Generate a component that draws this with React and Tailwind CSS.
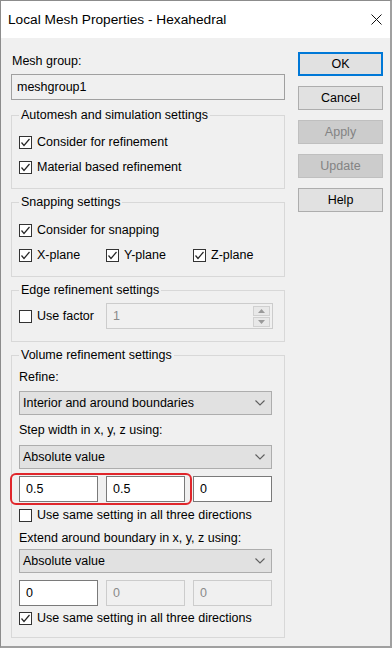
import React from "react";

function Check({ checked }) {
  return (
    <div className="w-[13px] h-[13px] border border-[#333333] bg-white flex items-center justify-center shrink-0">
      {checked && (
        <svg width="11" height="11" viewBox="0 0 11 11">
          <polyline points="1.5,5.5 4,8.5 9.5,2" fill="none" stroke="#262626" strokeWidth="1.2" />
        </svg>
      )}
    </div>
  );
}

function CheckRow({ checked, label, className = "" }) {
  return (
    <div className={"h-[16px] flex items-center gap-[5px] " + className}>
      <Check checked={checked} />
      <span className="whitespace-nowrap">{label}</span>
    </div>
  );
}

function Group({ title, className = "", children }) {
  return (
    <div className={"relative border border-[#d8d8d8] " + className}>
      <div className="absolute top-[-9px] left-[7px] px-[2px] bg-[#f0f0f0] leading-[16px] whitespace-nowrap">
        {title}
      </div>
      {children}
    </div>
  );
}

function Select({ value, className = "" }) {
  return (
    <div className={"h-[24px] w-[253px] bg-[#e1e1e1] border border-[#adadad] flex items-center justify-between pl-[3px] pr-[6px] " + className}>
      <span>{value}</span>
      <svg width="10" height="6" viewBox="0 0 10 6">
        <polyline points="0.5,0.5 5,5 9.5,0.5" fill="none" stroke="#5f5f5f" strokeWidth="1.1" />
      </svg>
    </div>
  );
}

function Input({ value, disabled }) {
  return (
    <div
      className={
        "h-[26px] flex items-center pl-[6px] border " +
        (disabled
          ? "bg-[#f0f0f0] border-[#cccccc] text-[#8a8a8a]"
          : "bg-white border-[#7a7a7a] text-black")
      }
    >
      {value}
    </div>
  );
}

function Btn({ label, kind }) {
  const cls =
    kind === "default"
      ? "bg-[#e1e1e1] border-2 border-[#0078d7] text-black"
      : kind === "disabled"
      ? "bg-[#cccccc] border border-[#bfbfbf] text-[#838383]"
      : "bg-[#e1e1e1] border border-[#adadad] text-black";
  return <div className={"h-[24px] w-[85px] flex items-center justify-center " + cls}>{label}</div>;
}

export default function App() {
  return (
    <div className="w-[392px] h-[648px] bg-[#f0f0f0] border-l border-t border-[#8c8c8c] border-r-2 border-b-2 border-r-[#a0a0a0] border-b-[#a0a0a0] flex flex-col font-['Liberation_Sans',Arial,sans-serif] text-[12.5px] leading-[16px] text-black overflow-hidden">
      {/* title bar */}
      <div className="h-[37px] bg-white flex items-center justify-between pl-[7px] pr-[8px] shrink-0">
        <span className="text-[13.7px] text-black">Local Mesh Properties - Hexahedral</span>
        <svg width="11" height="11" viewBox="0 0 11 11">
          <line x1="0.5" y1="0.5" x2="10.5" y2="10.5" stroke="#111" strokeWidth="1" />
          <line x1="10.5" y1="0.5" x2="0.5" y2="10.5" stroke="#111" strokeWidth="1" />
        </svg>
      </div>

      {/* body */}
      <div className="flex pl-[10px] gap-[13px]">
        {/* left column */}
        <div className="w-[274px] flex flex-col pt-[15px]">
          <div className="h-[16px] pl-[1px]">Mesh group:</div>
          <div className="mt-[5px] h-[26px] border border-[#a0a0a0] bg-[#f0f0f0] flex items-center pl-[5px]">
            meshgroup1
          </div>

          <Group title="Automesh and simulation settings" className="mt-[15px] h-[74px] pl-[7px] pt-[18px]">
            <div className="flex flex-col gap-[9px]">
              <CheckRow checked label="Consider for refinement" />
              <CheckRow checked label="Material based refinement" />
            </div>
          </Group>

          <Group title="Snapping settings" className="mt-[13px] h-[75px] pl-[7px] pt-[19px]">
            <div className="flex flex-col gap-[9px]">
              <CheckRow checked label="Consider for snapping" />
              <div className="grid grid-cols-[87px_87px_79px]">
                <CheckRow checked label="X-plane" />
                <CheckRow checked label="Y-plane" />
                <CheckRow checked label="Z-plane" />
              </div>
            </div>
          </Group>

          <Group title="Edge refinement settings" className="mt-[13px] h-[52px] pl-[7px] pt-[12px]">
            <div className="flex items-center">
              <CheckRow label="Use factor" className="w-[87px]" />
              <div className="w-[167px] h-[26px] border border-[#cccccc] bg-[#f0f0f0] flex items-center justify-between pl-[6px] pr-[2px] text-[#8a8a8a]">
                <span>1</span>
                <div className="flex flex-col gap-[1px]">
                  <div className="w-[17px] h-[10px] bg-[#e8e8e8] border border-[#d0d0d0] flex items-center justify-center">
                    <svg width="7" height="4" viewBox="0 0 7 4"><polygon points="0,4 3.5,0 7,4" fill="#9a9a9a" /></svg>
                  </div>
                  <div className="w-[17px] h-[10px] bg-[#e8e8e8] border border-[#d0d0d0] flex items-center justify-center">
                    <svg width="7" height="4" viewBox="0 0 7 4"><polygon points="0,0 3.5,4 7,0" fill="#9a9a9a" /></svg>
                  </div>
                </div>
              </div>
            </div>
          </Group>

          <Group title="Volume refinement settings" className="mt-[13px] h-[283px] pl-[7px] pt-[13px]">
            <div className="h-[16px]">Refine:</div>
            <Select value="Interior and around boundaries" className="mt-[6px]" />
            <div className="h-[16px] mt-[7px]">Step width in x, y, z using:</div>
            <Select value="Absolute value" className="mt-[7px]" />
            <div className="relative mt-[7px] w-[253px] grid grid-cols-[79px_79px_79px] gap-[8px]">
              <Input value="0.5" />
              <Input value="0.5" />
              <Input value="0" />
              <div className="absolute left-[-9px] top-[-3px] w-[182px] h-[32px] border-2 border-[#e0262b] rounded-[6px] pointer-events-none" />
            </div>
            <CheckRow label="Use same setting in all three directions" className="mt-[5px]" />
            <div className="h-[16px] mt-[7px]">Extend around boundary in x, y, z using:</div>
            <Select value="Absolute value" className="mt-[3px]" />
            <div className="mt-[7px] w-[253px] grid grid-cols-[79px_79px_79px] gap-[8px]">
              <Input value="0" />
              <Input value="0" disabled />
              <Input value="0" disabled />
            </div>
            <CheckRow checked label="Use same setting in all three directions" className="mt-[4px]" />
          </Group>
        </div>

        {/* right column */}
        <div className="w-[85px] flex flex-col gap-[10px] pt-[14px]">
          <Btn label="OK" kind="default" />
          <Btn label="Cancel" />
          <Btn label="Apply" kind="disabled" />
          <Btn label="Update" kind="disabled" />
          <Btn label="Help" />
        </div>
      </div>
    </div>
  );
}
